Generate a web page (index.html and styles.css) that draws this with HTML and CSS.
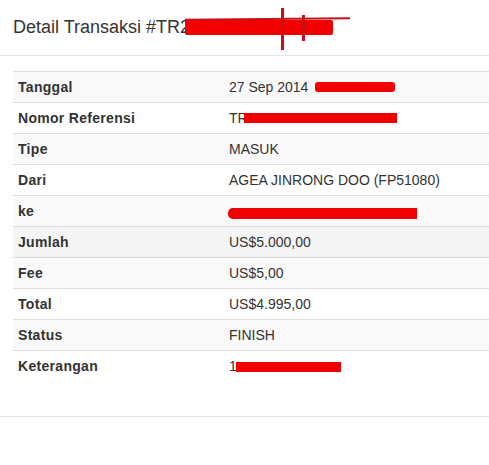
FILE: index.html
```html
<!DOCTYPE html>
<html>
<head>
<meta charset="utf-8">
<link rel="stylesheet" href="styles.css">
</head>
<body>
<div class="modal">
  <div class="modal-header">
    <h4 class="modal-title">Detail Transaksi #TR2<span class="redact title-redact"><span class="scribble s1"></span><span class="scribble s2"></span><span class="scribble s3"></span></span></h4>
  </div>
  <div class="modal-body">
    <table class="detail">
      <tbody>
        <tr><th>Tanggal</th><td>27 Sep 2014 <span class="redact r-date"></span></td></tr>
        <tr><th>Nomor Referensi</th><td>TR<span class="redact r-ref"></span></td></tr>
        <tr><th>Tipe</th><td>MASUK</td></tr>
        <tr><th>Dari</th><td>AGEA JINRONG DOO (FP51080)</td></tr>
        <tr><th>ke</th><td><span class="redact r-ke"></span></td></tr>
        <tr class="hover"><th>Jumlah</th><td>US$5.000,00</td></tr>
        <tr><th>Fee</th><td>US$5,00</td></tr>
        <tr><th>Total</th><td>US$4.995,00</td></tr>
        <tr><th>Status</th><td>FINISH</td></tr>
        <tr><th>Keterangan</th><td>1<span class="redact r-ket"></span></td></tr>
      </tbody>
    </table>
  </div>
  <div class="modal-footer"></div>
</div>
</body>
</html>
```
FILE: styles.css
```css
* { box-sizing: border-box; }
html, body { margin: 0; padding: 0; background: #fff; }
body {
  font-family: "Liberation Sans", Arial, sans-serif;
  font-size: 14px;
  line-height: 20px;
  color: #333;
}
.modal { width: 489px; }
.modal-header {
  padding: 15px 15px 15px 13px;
  border-bottom: 1px solid #e5e5e5;
}
.modal-title {
  margin: 0;
  font-size: 18px;
  font-weight: normal;
  line-height: 25px;
  color: #333;
  white-space: nowrap;
}
.modal-body {
  padding: 15px 0 15px 13px;
}
.detail {
  width: 100%;
  border-collapse: collapse;
  border-spacing: 0;
  margin-bottom: 20px;
}
.detail th, .detail td {
  padding: 5px;
  line-height: 20px;
  text-align: left;
  vertical-align: top;
  border-top: 1px solid #ddd;
  white-space: nowrap;
}
.detail th {
  width: 211px;
  font-weight: bold;
  letter-spacing: 0.3px;
}
.detail tr:nth-child(odd) { background: #f9f9f9; }
.detail tr.hover { background: #f5f5f5; }
.modal-footer {
  border-top: 1px solid #e5e5e5;
  height: 49px;
}
.redact {
  display: inline-block;
  background: #f20000;
  vertical-align: middle;
  position: relative;
}
.title-redact {
  width: 148px;
  height: 15px;
  margin-left: -5px;
  top: -1px;
  border-radius: 2px;
}
.scribble { position: absolute; background: #c81018; display: block; }
.s1 { left: 0; right: -17px; top: -2px; height: 2px; transform: rotate(-0.5deg); }
.s2 { left: 96px; top: -12px; width: 3px; height: 42px; }
.s3 { left: 117px; top: -5px; width: 3px; height: 26px; }
.r-date { width: 80px; height: 10px; margin-left: 3px; top: -1px; border-radius: 3px; }
.r-ref { width: 153px; height: 10px; margin-left: -4px; top: -1px; }
.r-ke { width: 189px; height: 11px; margin-left: -1px; top: 1px; border-radius: 5px 0 0 5px; }
.r-ket { width: 105px; height: 10px; margin-left: -1px; top: 0; }
```
